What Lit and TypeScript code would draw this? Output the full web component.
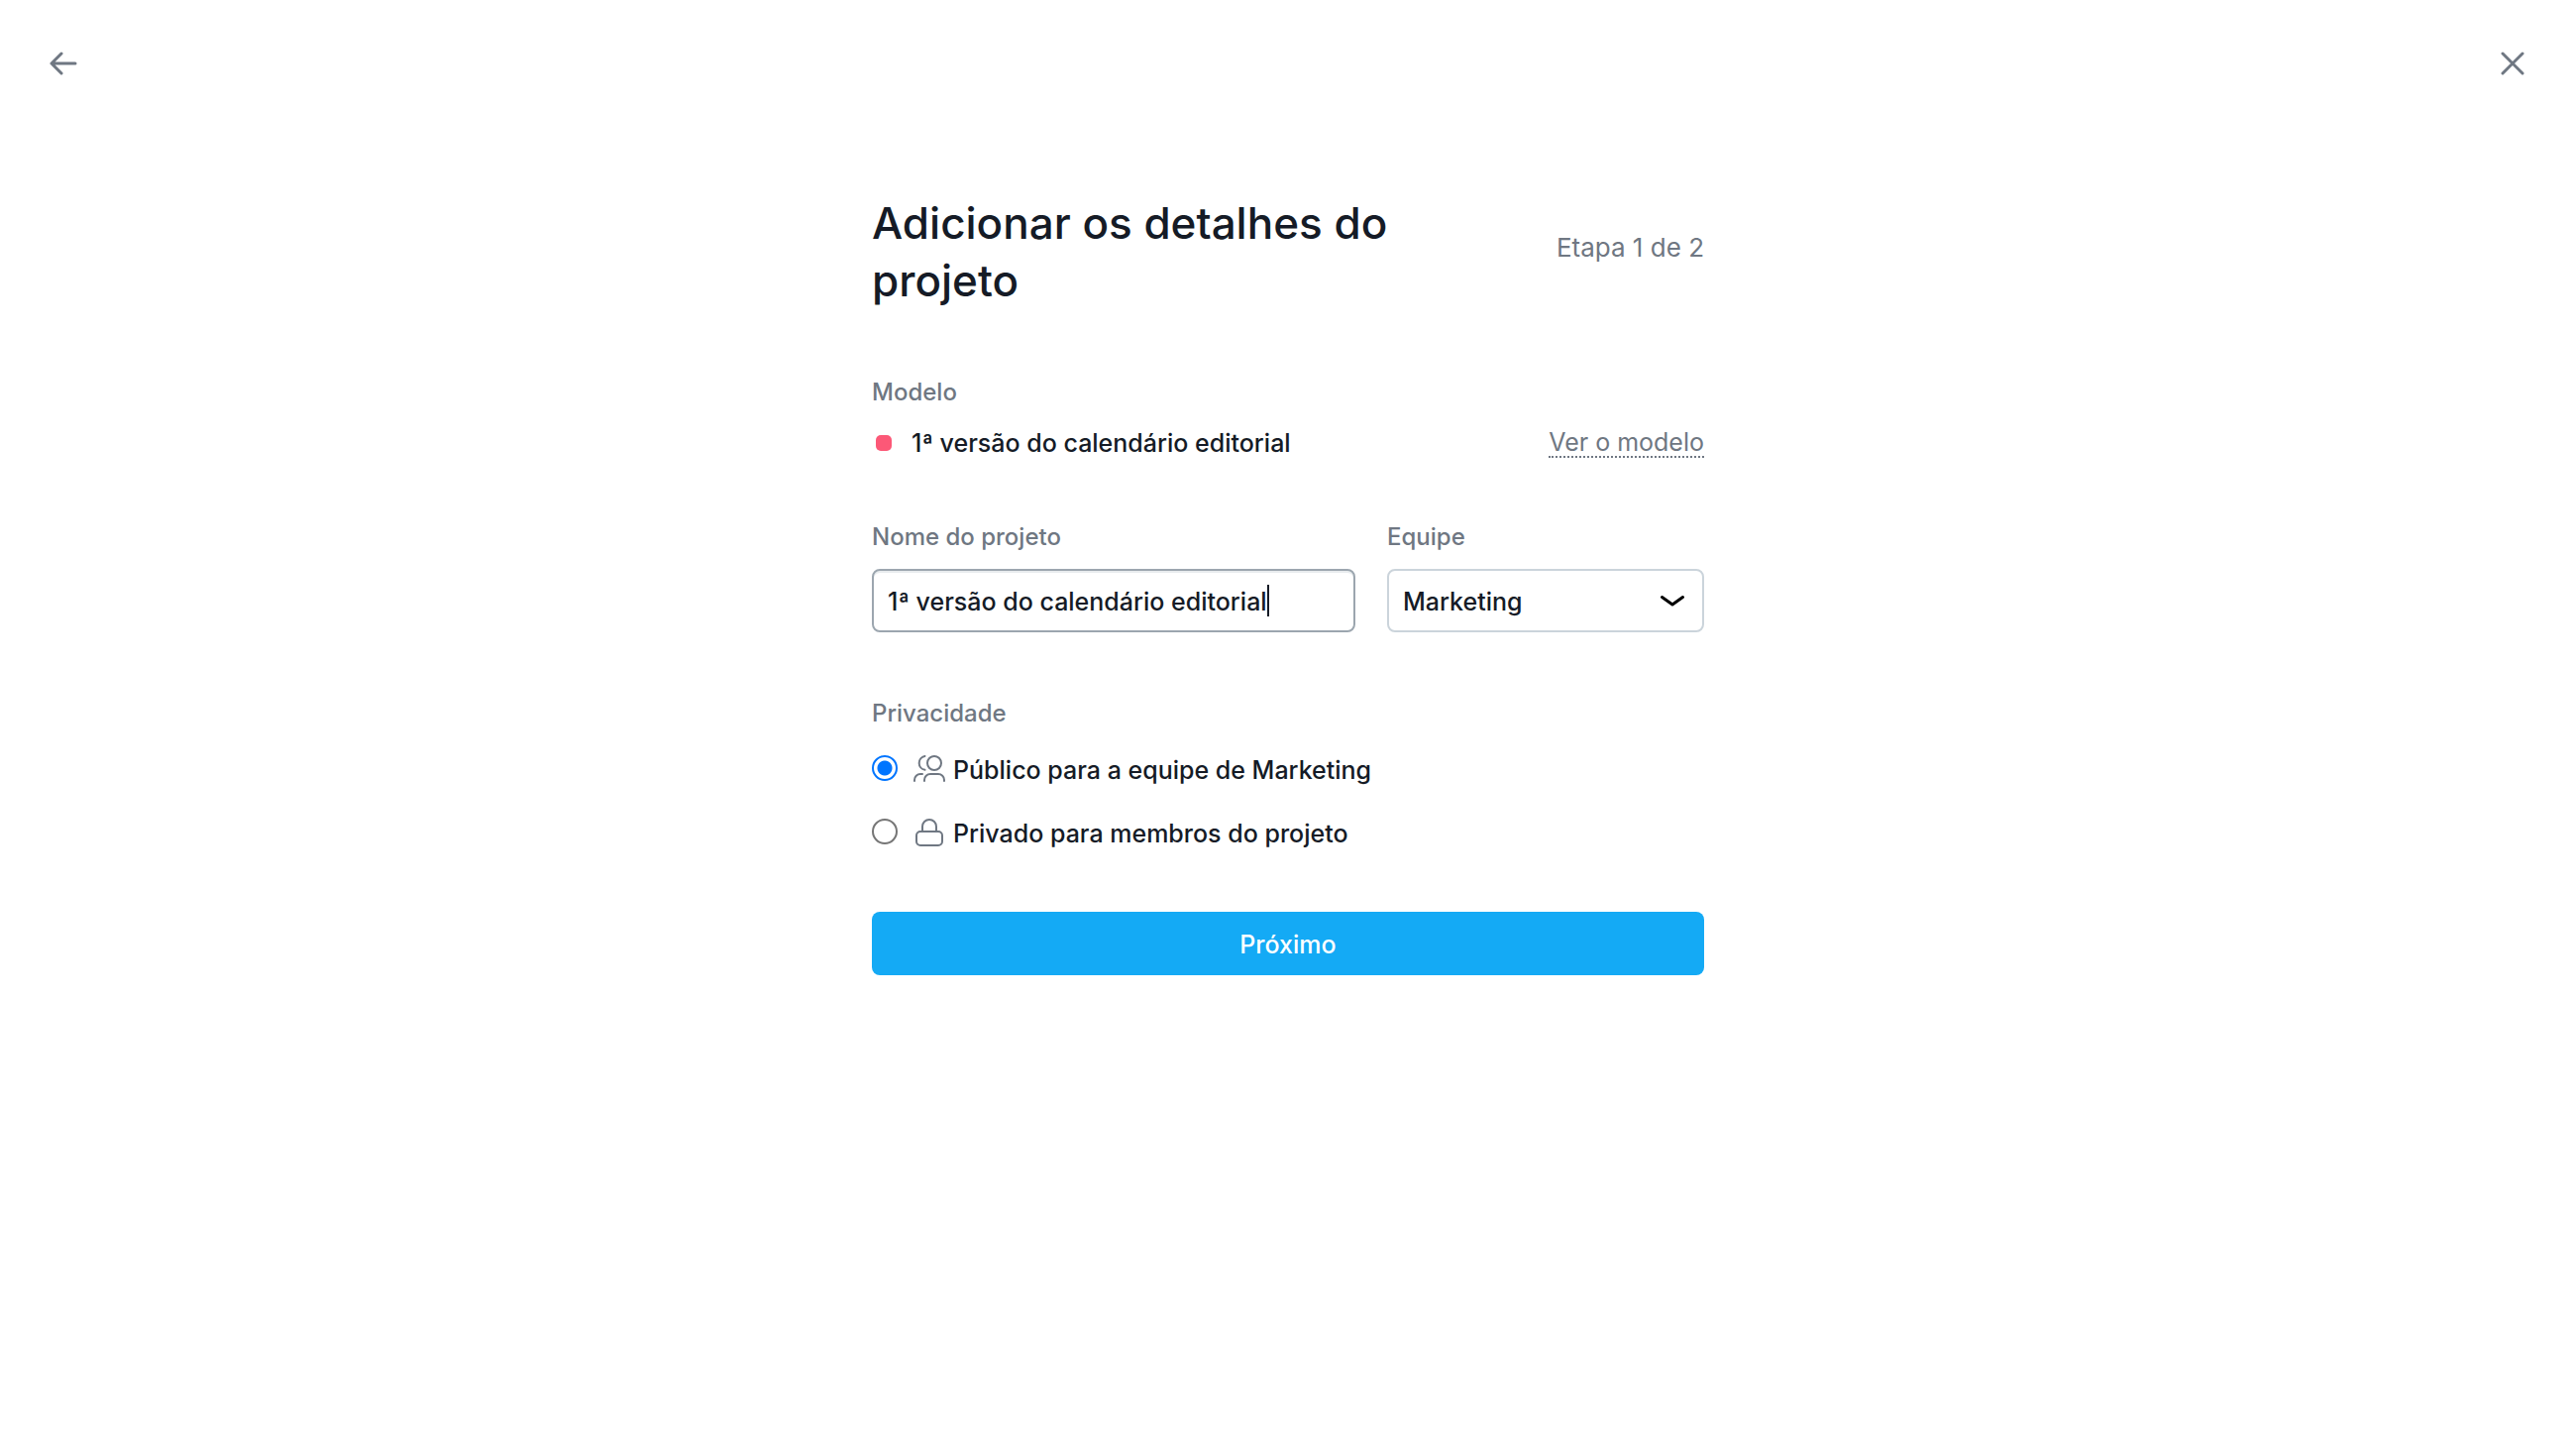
import { LitElement, html, css, svg } from "lit";
import { customElement, query, state } from "lit/decorators.js";

type Privacy = "public" | "private";

const peopleIcon = svg`
  <circle cx="21" cy="8" r="7"></circle>
  <path d="M11.500 1A7 7 0 0 0 11.500 14.800"></path>
  <path d="M11 26v-1a6 6 0 0 1 6-6h8a6 6 0 0 1 6 6v1"></path>
  <path d="M1 26v-1a6 6 0 0 1 6-6h2"></path>`;

const lockIcon = svg`
  <rect x="3" y="13" width="26" height="14" rx="4"></rect>
  <path d="M9 13V8a7 7 0 0 1 14 0v5"></path>`;

@customElement("app-root")
export class AppRoot extends LitElement {
  static styles = css`
    :host {
      display: block;
      min-height: 100vh;
      background: #ffffff;
      color: #151b26;
      font-family: Inter, "Liberation Sans", sans-serif;
      font-size: 25px;
      font-weight: 500;
      line-height: 32px;
    }
    *,
    *::before,
    *::after {
      box-sizing: border-box;
    }
    .topbar {
      display: flex;
      justify-content: space-between;
      padding: 40px;
    }
    .icon-button {
      display: grid;
      place-items: center;
      width: 48px;
      height: 48px;
      padding: 0;
      border: 0;
      background: none;
      color: #6f7782;
      cursor: pointer;
    }
    .icon {
      display: block;
      fill: none;
      stroke: currentColor;
      stroke-width: 2;
      stroke-linecap: round;
      stroke-linejoin: round;
    }
    .bold {
      stroke-width: 3;
    }
    .form {
      display: flex;
      flex-direction: column;
      max-width: 840px;
      margin: 0 auto;
      padding: 68px 0;
    }
    .heading {
      display: flex;
      align-items: center;
      justify-content: space-between;
      gap: 80px;
    }
    .title {
      flex: 1;
      margin: 0;
      font-size: 44px;
      font-weight: 500;
      line-height: 58px;
    }
    .step {
      padding-bottom: 8px;
      color: #6f7782;
      font-size: 26px;
      font-weight: 400;
      white-space: nowrap;
    }
    .label {
      display: block;
      padding: 0;
      color: #6f7782;
      font-size: 24px;
      line-height: 28px;
    }
    .template {
      margin-top: 70px;
    }
    .template-row {
      display: flex;
      align-items: center;
      margin-top: 21px;
    }
    .swatch {
      width: 16px;
      height: 16px;
      margin: 0 20px 0 4px;
      border-radius: 5px;
      background: #fc5877;
    }
    .template-name {
      flex: 1;
    }
    .link {
      border-bottom: 2px dotted #6f7782;
      color: #6f7782;
      font-weight: 400;
      line-height: 28px;
      text-decoration: none;
    }
    .fields {
      display: grid;
      grid-template-columns: 488fr 320fr;
      gap: 32px;
      margin-top: 65px;
    }
    .control {
      position: relative;
      display: block;
      margin-top: 18px;
    }
    .input,
    .select {
      display: block;
      width: 100%;
      height: 64px;
      margin: 0;
      padding: 2px 14px 0;
      border: 2px solid #cbd4db;
      border-radius: 8px;
      outline: none;
      background: #ffffff;
      color: inherit;
      font: inherit;
      appearance: none;
    }
    .input {
      border-color: #9ca6af;
      box-shadow: inset 0 2px #e8ecee;
      caret-color: transparent;
    }
    .caret {
      position: absolute;
      top: 16px;
      width: 2px;
      height: 32px;
      background: #151b26;
      pointer-events: none;
    }
    .chevron {
      position: absolute;
      top: 20px;
      right: 20px;
      color: #000000;
      pointer-events: none;
    }
    .privacy {
      display: flex;
      flex-direction: column;
      margin: 68px 0 0;
      padding: 0;
      border: 0;
    }
    .options {
      display: grid;
      gap: 32px;
      margin-top: 27px;
    }
    .option {
      display: flex;
      align-items: center;
      color: inherit;
      cursor: pointer;
    }
    .radio {
      width: 26px;
      height: 26px;
      margin: 0 16px 4px 0;
      border: 2px solid #767676;
      border-radius: 50%;
      background: #ffffff;
      appearance: none;
    }
    .radio:checked {
      border-color: #0075ff;
      background: radial-gradient(circle, #0075ff 7px, #ffffff 8px);
    }
    .option .icon {
      margin: 0 8px 2px 0;
      color: #6f7782;
    }
    .submit {
      height: 64px;
      margin-top: 63px;
      padding: 2px 16px 0;
      border: 0;
      border-radius: 8px;
      background: #14aaf5;
      color: #ffffff;
      font: inherit;
      cursor: pointer;
    }
  `;

  @state() private projectName = "1ª versão do calendário editorial";
  @state() private privacy: Privacy = "public";
  @state() private caretLeft = 16;
  @query(".input") private input!: HTMLInputElement;

  protected firstUpdated() {
    this.placeCaret();
  }

  private placeCaret() {
    const pen = document.createElement("canvas").getContext("2d");
    if (!pen) return;
    const style = getComputedStyle(this.input);
    pen.font = `${style.fontWeight} ${style.fontSize} ${style.fontFamily}`;
    const end = this.input.selectionEnd || this.projectName.length;
    this.caretLeft = 16 + Math.round(pen.measureText(this.projectName.slice(0, end)).width);
  }

  private onInput() {
    this.projectName = this.input.value;
    this.placeCaret();
  }

  private option(value: Privacy, text: string, icon: unknown) {
    return html`<label class="option">
      <input
        class="radio"
        type="radio"
        name="privacy"
        .value=${value}
        ?checked=${this.privacy === value}
        @change=${() => (this.privacy = value)}
      />
      <svg class="icon" width="32" height="28" viewBox="0 0 32 28" aria-hidden="true">${icon}</svg>
      <span>${text}</span>
    </label>`;
  }

  render() {
    return html`
      <header class="topbar">
        <button class="icon-button" type="button" aria-label="Voltar">
          <svg class="icon bold" width="28" height="28" viewBox="0 0 28 28" aria-hidden="true">
            <path d="M26 14H2M12 4L2 14l10 10"></path>
          </svg>
        </button>
        <button class="icon-button" type="button" aria-label="Fechar">
          <svg class="icon bold" width="28" height="28" viewBox="0 0 28 28" aria-hidden="true">
            <path d="M4 4l20 20M24 4L4 24"></path>
          </svg>
        </button>
      </header>
      <form class="form" @submit=${(e: Event) => e.preventDefault()}>
        <div class="heading">
          <h1 class="title">Adicionar os detalhes do projeto</h1>
          <span class="step">Etapa 1 de 2</span>
        </div>
        <section class="template">
          <span class="label">Modelo</span>
          <div class="template-row">
            <span class="swatch"></span>
            <span class="template-name">1ª versão do calendário editorial</span>
            <a class="link" href="#modelo">Ver o modelo</a>
          </div>
        </section>
        <div class="fields">
          <div>
            <label class="label" for="name">Nome do projeto</label>
            <div class="control">
              <input
                class="input"
                id="name"
                type="text"
                autocomplete="off"
                .value=${this.projectName}
                @input=${this.onInput}
              />
              <span class="caret" style="left: ${this.caretLeft}px"></span>
            </div>
          </div>
          <div>
            <label class="label" for="team">Equipe</label>
            <div class="control">
              <select class="select" id="team">
                <option>Marketing</option>
              </select>
              <svg class="icon bold chevron" width="24" height="24" viewBox="0 0 24 24" aria-hidden="true">
                <path d="M1.500 8.500L12 16l10.500-7.500"></path>
              </svg>
            </div>
          </div>
        </div>
        <fieldset class="privacy">
          <legend class="label">Privacidade</legend>
          <div class="options">
            ${this.option("public", "Público para a equipe de Marketing", peopleIcon)}
            ${this.option("private", "Privado para membros do projeto", lockIcon)}
          </div>
        </fieldset>
        <button class="submit" type="submit">Próximo</button>
      </form>
    `;
  }
}
